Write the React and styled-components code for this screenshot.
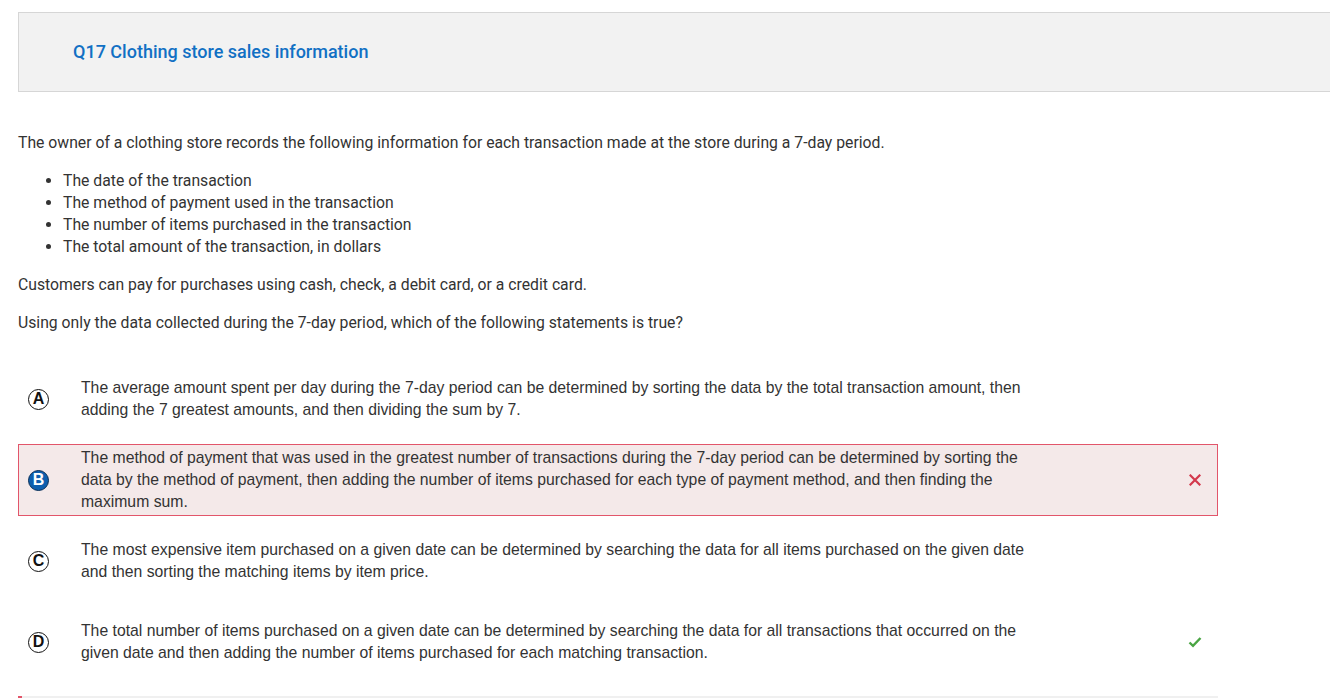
import styled, { createGlobalStyle } from "styled-components";

const GlobalStyle = createGlobalStyle`
  html, body {
    margin: 0;
    padding: 0;
    background: #fff;
    overflow-x: hidden;
  }
  body {
    font-family: Roboto, "Liberation Sans", Arial, sans-serif;
    color: #333;
  }
`;

const Page = styled.div`
  padding: 12px 0 0 18px;
  width: 1340px;
`;

const Header = styled.div`
  height: 78px;
  border: 1px solid #d6d6d6;
  background: #f2f2f2;
  display: flex;
  align-items: center;
  padding-left: 54px;
  box-sizing: content-box;
`;

const Title = styled.h1`
  margin: 0 0 2px;
  font-size: 18px;
  font-weight: 500;
  color: #1170c4;
`;

const Stem = styled.div`
  width: 1200px;
  padding-top: 40px;
  font-size: 15.75px;
  line-height: 22px;
  color: #333;
`;

const Para = styled.p`
  margin: 0 0 16px;
`;

const List = styled.ul`
  margin: 0 0 16px;
  padding-left: 45px;
`;

const Options = styled.div`
  width: 1200px;
  margin-top: 29px;
  display: flex;
  flex-direction: column;
  gap: 9px;
`;

const Option = styled.div`
  height: 72px;
  box-sizing: border-box;
  display: flex;
  align-items: center;
  border: 1px solid ${(p) => (p.wrong ? "#e2556a" : "transparent")};
  background: ${(p) => (p.wrong ? "#f4e9e9" : "transparent")};
  padding: 2px 0;
`;

const Bubble = styled.span`
  width: 21px;
  height: 21px;
  margin-left: 9px;
  margin-right: 32px;
  border-radius: 50%;
  box-sizing: border-box;
  border: 1.5px solid ${(p) => (p.selected ? "#0a2f57" : "#111")};
  background: ${(p) => (p.selected ? "#0e5fae" : "#fff")};
  color: ${(p) => (p.selected ? "#fff" : "#111")};
  font-family: "Liberation Sans", Arial, sans-serif;
  font-weight: 700;
  font-size: 16px;
  line-height: 1;
  display: flex;
  align-items: center;
  justify-content: center;
  flex-shrink: 0;
`;

const OptionText = styled.div`
  width: 960px;
  font-family: "Liberation Sans", Arial, sans-serif;
  font-size: 15.75px;
  line-height: 22px;
  color: #333;
`;

const Mark = styled.div`
  margin-left: auto;
  margin-right: 14px;
  width: 16px;
  height: 16px;
  display: flex;
  align-items: center;
  justify-content: center;
`;

const BottomBar = styled.div`
  width: 1200px;
  height: 4px;
  margin-top: 18px;
  background: #f0f0f0;
  border-left: 4px solid #e2556a;
  box-sizing: border-box;
`;

const Cross = () => (
  <svg width="12" height="12" viewBox="0 0 12 12">
    <path d="M1.5 1.5 L10.5 10.5 M10.5 1.5 L1.5 10.5" stroke="#d3384c" strokeWidth="2.2" strokeLinecap="square" />
  </svg>
);

const Check = () => (
  <svg width="14" height="12" viewBox="0 0 14 12">
    <path d="M1.5 6.5 L5 9.8 L12.5 2" stroke="#4aa543" strokeWidth="2.4" fill="none" />
  </svg>
);

const options = [
  {
    letter: "A",
    text: "The average amount spent per day during the 7-day period can be determined by sorting the data by the total transaction amount, then adding the 7 greatest amounts, and then dividing the sum by 7.",
  },
  {
    letter: "B",
    text: "The method of payment that was used in the greatest number of transactions during the 7-day period can be determined by sorting the data by the method of payment, then adding the number of items purchased for each type of payment method, and then finding the maximum sum.",
    selected: true,
    wrong: true,
  },
  {
    letter: "C",
    text: "The most expensive item purchased on a given date can be determined by searching the data for all items purchased on the given date and then sorting the matching items by item price.",
  },
  {
    letter: "D",
    text: "The total number of items purchased on a given date can be determined by searching the data for all transactions that occurred on the given date and then adding the number of items purchased for each matching transaction.",
    correct: true,
  },
];

const App = () => {
  return (
    <>
      <GlobalStyle />
      <Page>
        <Header>
          <Title>Q17 Clothing store sales information</Title>
        </Header>
        <Stem>
          <Para>
            The owner of a clothing store records the following information for each transaction made at the store during a 7-day period.
          </Para>
          <List>
            <li>The date of the transaction</li>
            <li>The method of payment used in the transaction</li>
            <li>The number of items purchased in the transaction</li>
            <li>The total amount of the transaction, in dollars</li>
          </List>
          <Para>Customers can pay for purchases using cash, check, a debit card, or a credit card.</Para>
          <Para>Using only the data collected during the 7-day period, which of the following statements is true?</Para>
        </Stem>
        <Options>
          {options.map((o) => (
            <Option key={o.letter} wrong={o.wrong}>
              <Bubble selected={o.selected}>{o.letter}</Bubble>
              <OptionText>{o.text}</OptionText>
              <Mark>
                {o.wrong && <Cross />}
                {o.correct && <Check />}
              </Mark>
            </Option>
          ))}
        </Options>
        <BottomBar />
      </Page>
    </>
  );
};

export default App;
